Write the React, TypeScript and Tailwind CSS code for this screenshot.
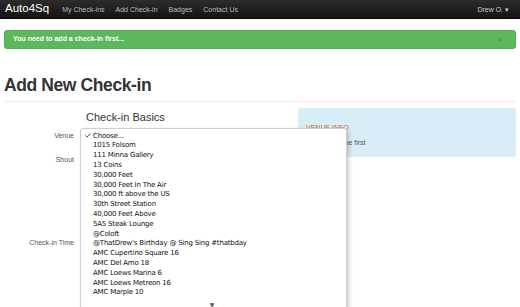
import { Check } from "lucide-react";

const NAV = ["My Check-ins", "Add Check-in", "Badges", "Contact Us"];

const VENUES = [
  "1015 Folsom",
  "111 Minna Gallery",
  "13 Coins",
  "30,000 Feet",
  "30,000 Feet In The Air",
  "30,000 ft above the US",
  "30th Street Station",
  "40,000 Feet Above",
  "5A5 Steak Lounge",
  "@Coloft",
  "@ThatDrew's Birthday @ Sing Sing #thatbday",
  "AMC Cupertino Square 16",
  "AMC Del Amo 18",
  "AMC Loews Marina 6",
  "AMC Loews Metreon 16",
  "AMC Marple 10",
];

export default function App() {
  return (
    <div className="relative h-[307px] w-[520px] overflow-hidden bg-white font-['Liberation_Sans',Arial,sans-serif] text-[#333]">
      {/* navbar */}
      <div className="flex h-[19px] items-center border-b border-[#080808] bg-gradient-to-b from-[#2c2c2c] to-[#141414] px-[5px]">
        <span className="text-[11.5px] leading-none text-white">Auto4Sq</span>
        <div className="ml-[13px] flex gap-[11px]">
          {NAV.map((n) => (
            <span key={n} className="text-[7px] leading-none text-[#bbb]">{n}</span>
          ))}
        </div>
        <span className="ml-auto mr-[6px] text-[7px] leading-none text-[#ccc]">Drew O. ▾</span>
      </div>

      <div className="px-1">
        <div className="mt-[11px] flex h-[19px] items-center rounded-[3px] border border-[#4cae4c] bg-[#5cb85c] px-[8px]">
          <span className="text-[7px] font-bold text-white">You need to add a check-in first...</span>
          <span className="ml-auto mr-[5px] text-[8px] text-[#3c8a3c]">×</span>
        </div>

        <h1 className="mt-[28px] text-[17.5px] font-bold leading-none tracking-[-0.4px] text-[#333]">Add New Check-in</h1>
        <div className="mt-[6px] border-t border-[#eee]" />

        <div className="mt-[6px] flex">
          <div className="w-[292px]">
            <div className="ml-[82px] mt-[4px] text-[11px] leading-none text-[#333]">Check-in Basics</div>
            <div className="mt-[6px] flex flex-col text-[7px] text-[#555]">
              <div className="flex h-[16px] items-center"><span className="w-[70px] text-right">Venue</span></div>
              <div className="mt-[8px] flex h-[16px] items-center"><span className="w-[70px] text-right">Shout</span></div>
              <div className="mt-[67px] flex h-[16px] items-center"><span className="w-[70px] text-right">Check-in Time</span></div>
            </div>
          </div>
          <div className="ml-[2px] h-[49px] w-[218px] rounded-[3px] bg-[#d9edf7] px-[8px] pt-[16px]">
            <div className="text-[7px] uppercase leading-none text-[#c0703a]">Venue Info</div>
            <div className="mt-[8px] text-[7px] leading-none text-[#3a5a6a]">Select a venue first</div>
          </div>
        </div>
      </div>

      {/* open select menu */}
      <div className="absolute left-[80px] top-[128px] h-[182px] w-[267px] rounded-[3px] border border-[#d0d0d0] bg-white pt-[2px] shadow-[2px_2px_4px_rgba(0,0,0,0.2)] font-['DejaVu_Sans',sans-serif] text-[7px] tracking-[-0.2px] text-[#111]">
        <div className="flex h-[9.8px] items-center">
          <Check className="ml-[3px] h-[7px] w-[8px]" strokeWidth={2.5} />
          <span className="ml-[1px]">Choose...</span>
        </div>
        {VENUES.map((v) => (
          <div key={v} className="flex h-[9.8px] items-center pl-[12px]">{v}</div>
        ))}
        <div className="mt-[2px] flex justify-center pr-[3px] text-[6px] text-[#555]">▼</div>
      </div>
    </div>
  );
}
